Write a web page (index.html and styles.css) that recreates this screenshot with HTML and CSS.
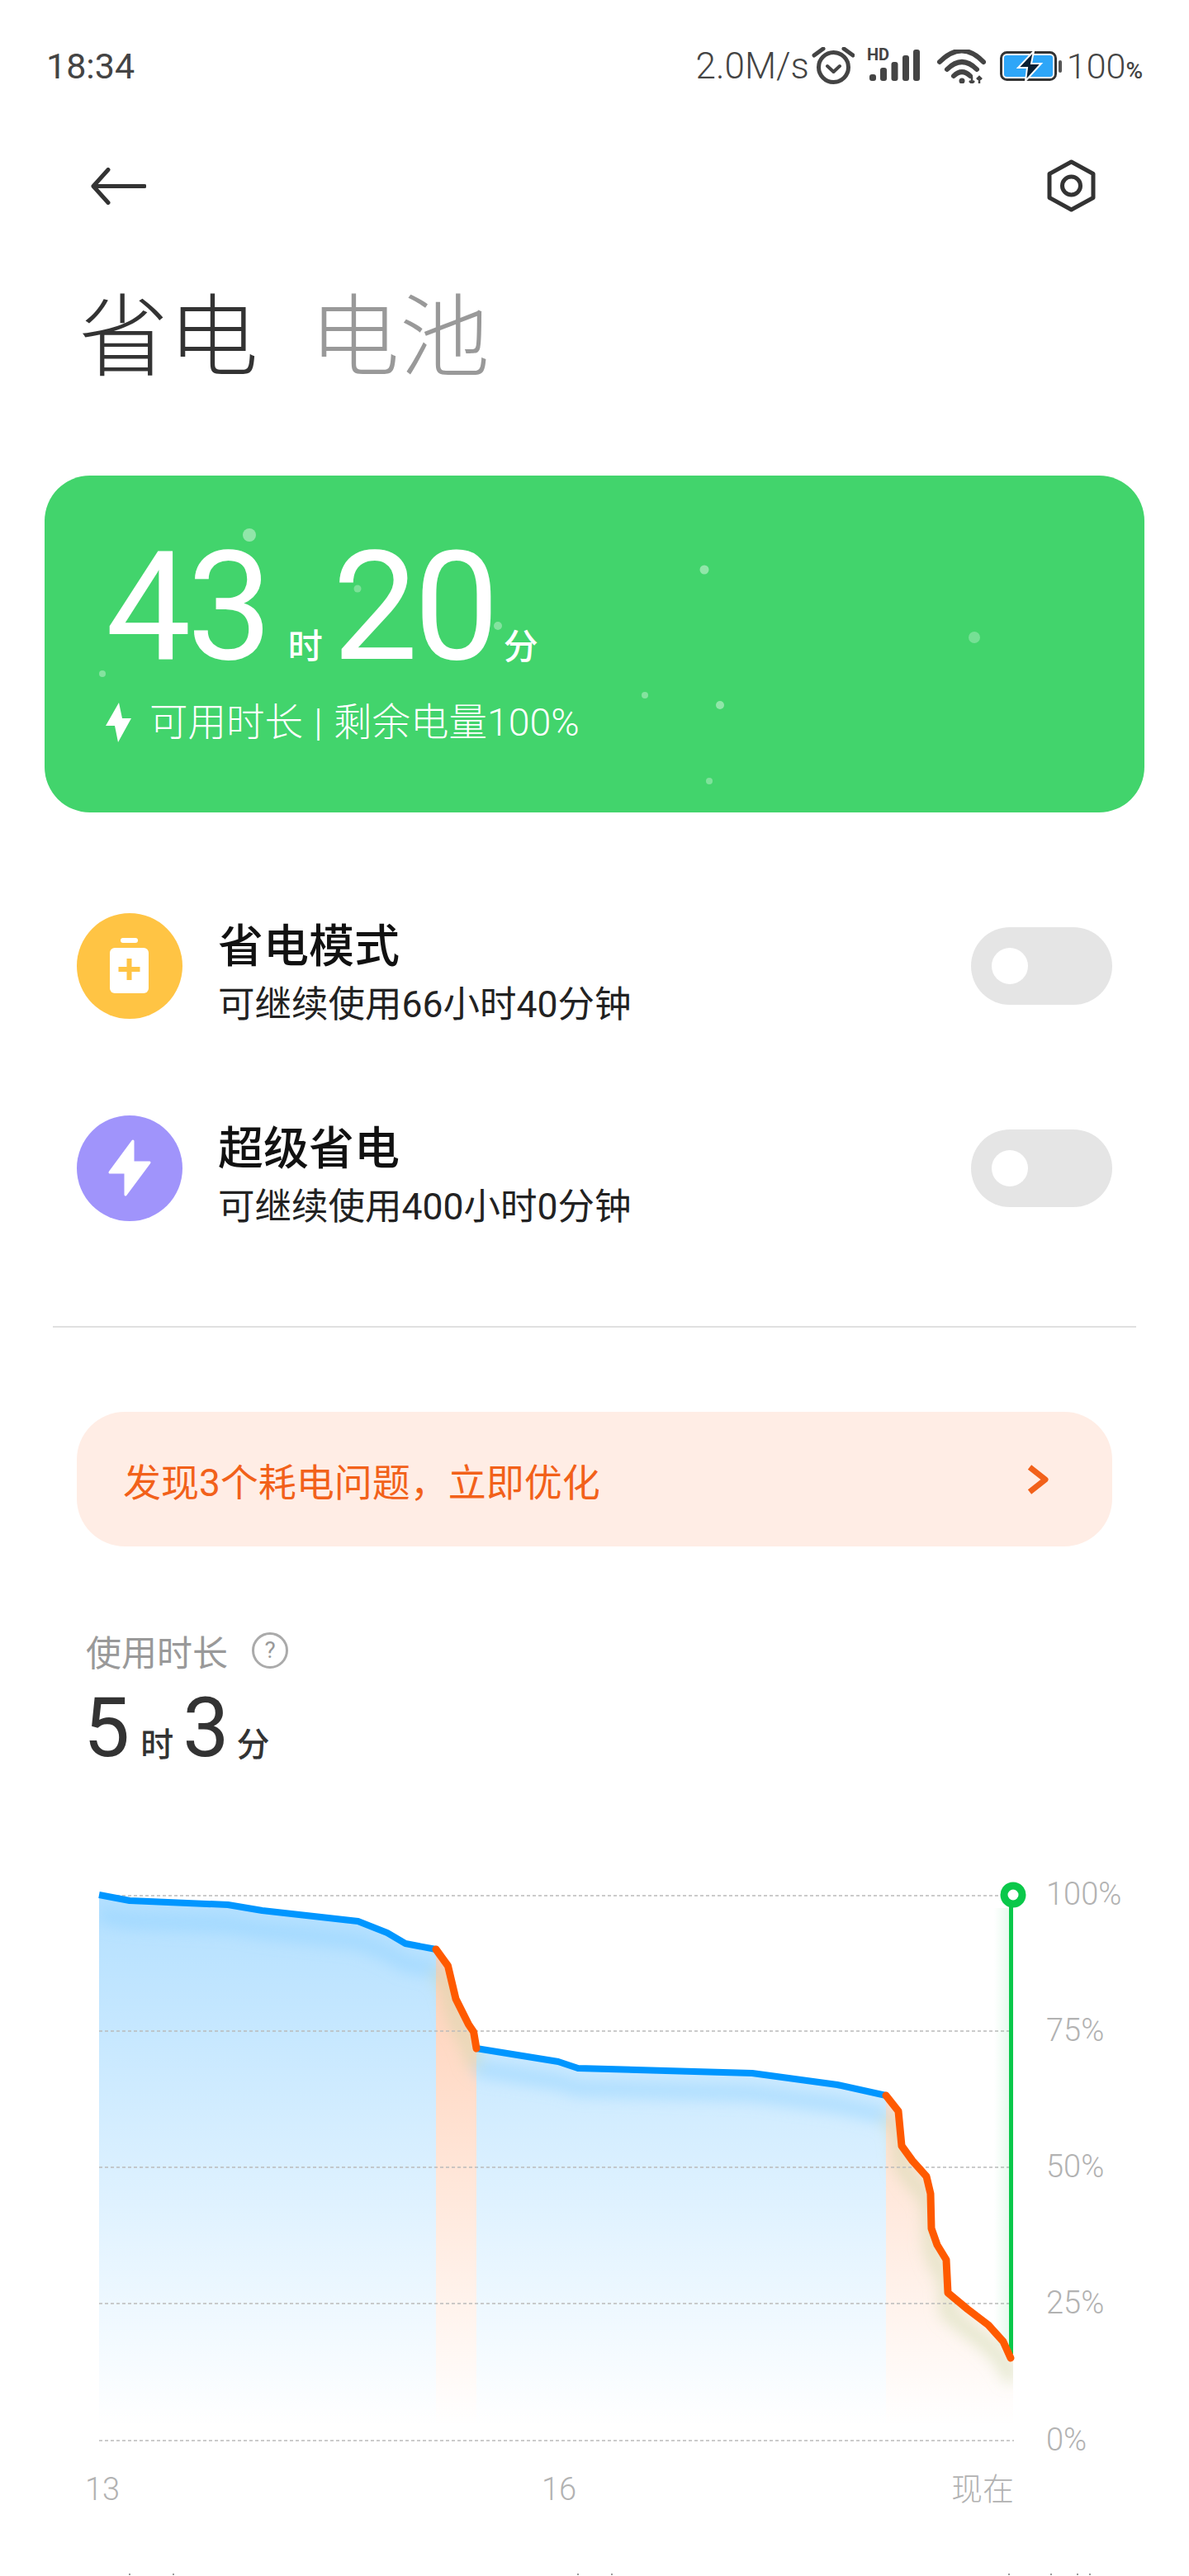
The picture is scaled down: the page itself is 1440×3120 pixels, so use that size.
FILE: index.html
```html
<!DOCTYPE html>
<html lang="zh-CN">
<head>
    <meta charset="UTF-8" />
    <title>省电</title>
    <link rel="stylesheet" href="styles.css">
</head>
<body>
<div class="page">
    <!-- Status bar -->
    <div class="status-bar">
        <span class="clock">18:34</span>
        <div class="status-right">
            <span class="net-speed">2.0M/s</span>
            <svg class="ic-alarm" viewBox="0 0 52 46">
                <circle cx="26.5" cy="24.5" r="18" fill="none" stroke="#444" stroke-width="5"/>
                <path d="M3 10 L14 2 M39 2 L50 10" stroke="#444" stroke-width="5" stroke-linecap="round"/>
                <path d="M19 23 L26.5 30 L34 23" fill="none" stroke="#444" stroke-width="4" stroke-linecap="round" stroke-linejoin="round"/>
            </svg>
            <svg class="ic-signal" viewBox="0 -6 64 46">
                <text class="hd-text" x="0" y="14">HD</text>
                <rect x="3" y="31" width="8" height="8" rx="3" fill="#444"/>
                <rect x="16" y="23" width="8" height="16" rx="3" fill="#444"/>
                <rect x="29.5" y="16" width="8" height="23" rx="3" fill="#444"/>
                <rect x="43" y="8" width="8" height="31" rx="3" fill="#444"/>
                <rect x="56" y="1" width="8" height="38" rx="3" fill="#444"/>
            </svg>
            <svg class="ic-wifi" viewBox="0 0 59 41">
                <g fill="none" stroke="#444" stroke-width="6" stroke-linecap="round">
                    <path d="M3 15 Q30 -12 56 15"/>
                    <path d="M12 24 Q30 6 48 24"/>
                    <path d="M20 32 Q30 22 40 32"/>
                </g>
                <circle cx="30" cy="38" r="3.5" fill="#444"/>
                <path d="M42 33 V41 M39 38 L42 41 L45 38 M51 41 V33 M48 36 L51 33 L54 36" fill="none" stroke="#444" stroke-width="2.5"/>
            </svg>
            <svg class="ic-battery" viewBox="0 0 75 36">
                <rect x="1.5" y="1.5" width="66" height="33" rx="7" fill="none" stroke="#333" stroke-width="3"/>
                <rect x="5" y="5" width="59" height="26" rx="3" fill="#2ea6f8"/>
                <rect x="71" y="11" width="4" height="15" rx="2" fill="#555"/>
                <path d="M41 0 L22 20 L33 20 L31 36 L50 15 L38 15 Z" fill="#0b2033" stroke="#fff" stroke-width="2"/>
            </svg>
            <span class="batt-text">100<small>%</small></span>
        </div>
    </div>

    <!-- Nav -->
    <div class="nav">
        <svg class="ic-back" viewBox="0 0 67 45">
            <path d="M3 22.5 H65 M21 2.5 L3 22.5 L21 42.5" fill="none" stroke="#333" stroke-width="5" stroke-linecap="round" stroke-linejoin="round"/>
        </svg>
        <svg class="ic-settings" viewBox="0 0 59 64">
            <path d="M29.5 3 L56 17.5 V46.5 L29.5 61 L3 46.5 V17.5 Z" fill="none" stroke="#333" stroke-width="5" stroke-linejoin="round"/>
            <circle cx="29.5" cy="32" r="11" fill="none" stroke="#333" stroke-width="5"/>
        </svg>
    </div>

    <!-- Tabs -->
    <div class="tabs">
        <span class="tab active">省电</span>
        <span class="tab">电池</span>
    </div>

    <!-- Green card -->
    <div class="card">
        <svg class="particles" viewBox="0 0 1332 408">
            <circle cx="248" cy="72" r="8" opacity=".42"/>
            <circle cx="379" cy="137" r="4.5" opacity=".3"/>
            <circle cx="407" cy="171" r="4" opacity=".2"/>
            <circle cx="549" cy="182" r="5" opacity=".35"/>
            <circle cx="70" cy="240" r="4" opacity=".35"/>
            <circle cx="727" cy="266" r="4" opacity=".35"/>
            <circle cx="799" cy="114" r="5.5" opacity=".42"/>
            <circle cx="1126" cy="196" r="7" opacity=".28"/>
            <circle cx="818" cy="278" r="5" opacity=".42"/>
            <circle cx="805" cy="370" r="4" opacity=".32"/>
        </svg>
        <div class="remain">
            <span class="big">43</span><span class="unit">时</span><span class="big">20</span><span class="unit">分</span>
        </div>
        <div class="remain-sub">
            <svg class="ic-bolt" viewBox="0 0 31 48"><path d="M16 0 L0 28 H11 L15 48 L31 19 H20 Z" fill="#fff"/></svg>
            <span>可用时长 | 剩余电量100%</span>
        </div>
    </div>

    <!-- Modes -->
    <div class="modes">
        <div class="mode">
            <svg class="mode-icon" viewBox="0 0 128 128">
                <circle cx="64" cy="64" r="64" fill="#ffc444"/>
                <rect x="53" y="30" width="21" height="6" rx="3" fill="#fff"/>
                <rect x="40" y="42" width="47" height="55" rx="6" fill="#fff"/>
                <path d="M50.5 68 H76.5 M63.5 55 V81" stroke="#ffc444" stroke-width="6"/>
            </svg>
            <div class="mode-text">
                <div class="mode-title">省电模式</div>
                <div class="mode-sub">可继续使用66小时40分钟</div>
            </div>
            <div class="toggle"><span class="knob"></span></div>
        </div>
        <div class="mode">
            <svg class="mode-icon" viewBox="0 0 128 128">
                <circle cx="64" cy="64" r="64" fill="#a094fb"/>
                <path d="M68 31 L40 69 H59 V96 L88 57 H68 Z" fill="#fff" stroke="#fff" stroke-width="3" stroke-linejoin="round"/>
            </svg>
            <div class="mode-text">
                <div class="mode-title">超级省电</div>
                <div class="mode-sub">可继续使用400小时0分钟</div>
            </div>
            <div class="toggle"><span class="knob"></span></div>
        </div>
    </div>

    <div class="divider"></div>

    <!-- Problem banner -->
    <div class="banner">
        <span>发现3个耗电问题，立即优化</span>
        <svg class="ic-chevron" viewBox="0 0 26 36">
            <path d="M3 3 L22 18 L3 33" fill="none" stroke="#f2611a" stroke-width="7" stroke-linejoin="round"/>
        </svg>
    </div>

    <!-- Usage -->
    <div class="usage">
        <div class="usage-label">
            <span>使用时长</span>
            <span class="help">?</span>
        </div>
        <div class="usage-value">
            <span class="num">5</span><span class="unit-sm">时</span><span class="num">3</span><span class="unit-sm">分</span>
        </div>
    </div>

    <!-- Battery chart -->
    <svg class="chart" viewBox="0 2270 1440 770">
        <defs>
            <linearGradient id="blueFill" gradientUnits="userSpaceOnUse" x1="0" y1="2296" x2="0" y2="2940">
                <stop offset="0" stop-color="#0096ff" stop-opacity=".3"/>
                <stop offset="1" stop-color="#0096ff" stop-opacity="0"/>
            </linearGradient>
            <linearGradient id="orangeFill" gradientUnits="userSpaceOnUse" x1="0" y1="2296" x2="0" y2="2940">
                <stop offset="0" stop-color="#ff5a00" stop-opacity=".32"/>
                <stop offset="1" stop-color="#ff5a00" stop-opacity="0"/>
            </linearGradient>
            <linearGradient id="glow" x1="0" y1="0" x2="1" y2="0">
                <stop offset="0" stop-color="#0ac84a" stop-opacity="0"/>
                <stop offset="1" stop-color="#0ac84a" stop-opacity=".1"/>
            </linearGradient>
            <filter id="soft" x="-10%" y="-30%" width="120%" height="160%">
                <feGaussianBlur stdDeviation="9"/>
            </filter>
            <clipPath id="underCurve">
                <path d="M120 2296 L157 2303 L276 2308 L317.5 2315 L433.6 2328 L469 2342 L491 2355 L528 2362 L542.5 2382 L552 2422 L567.5 2453 L573.6 2462 L577 2482 L676 2498 L700 2506 L911 2512 L1014 2526 L1073 2539 L1088 2558 L1092 2600 L1105 2618 L1122 2637 L1127 2658 L1128 2700 L1135 2720 L1146 2738 L1148 2778 L1172 2798 L1197 2817 L1215 2837 L1227 2860 V2950 H120 Z"/>
            </clipPath>
        </defs>

        <!-- fills -->
        <path fill="url(#blueFill)" d="M120 2296 L157 2303 L276 2308 L317.5 2315 L433.6 2328 L469 2342 L491 2355 L528 2362 V2950 H120 Z"/>
        <path fill="url(#orangeFill)" d="M528 2362 L542.5 2382 L552 2422 L567.5 2453 L573.6 2462 L577 2482 V2950 H528 Z"/>
        <path fill="url(#blueFill)" d="M577 2482 L676 2498 L700 2506 L911 2512 L1014 2526 L1073 2539 V2950 H577 Z"/>
        <path fill="url(#orangeFill)" d="M1073 2539 L1088 2558 L1092 2600 L1105 2618 L1122 2637 L1127 2658 L1128 2700 L1135 2720 L1146 2738 L1148 2778 L1172 2798 L1197 2817 L1215 2837 L1227 2860 V2950 H1073 Z"/>

        <!-- soft shadow under the curve -->
        <g clip-path="url(#underCurve)" fill="none" stroke-width="18">
            <g transform="translate(0 24)" filter="url(#soft)">
                <path stroke="#8fd2ff" stroke-opacity=".55" d="M120 2296 L157 2303 L276 2308 L317.5 2315 L433.6 2328 L469 2342 L491 2355 L528 2362"/>
                <path stroke="#c9d8a8" stroke-opacity=".5" d="M528 2362 L542.5 2382 L552 2422 L567.5 2453 L577 2482"/>
                <path stroke="#8fd2ff" stroke-opacity=".55" d="M577 2482 L676 2498 L700 2506 L911 2512 L1014 2526 L1073 2539"/>
                <path stroke="#c9d8a8" stroke-opacity=".5" d="M1073 2539 L1088 2558 L1092 2600 L1105 2618 L1122 2637 L1127 2658 L1128 2700 L1135 2720 L1146 2738 L1148 2778 L1172 2798 L1197 2817 L1215 2837 L1227 2860"/>
            </g>
        </g>

        <!-- grid -->
        <g class="grid">
            <line x1="120" y1="2297" x2="1212" y2="2297"/>
            <line x1="120" y1="2461" x2="1222" y2="2461"/>
            <line x1="120" y1="2626" x2="1222" y2="2626"/>
            <line x1="120" y1="2791" x2="1222" y2="2791"/>
            <line x1="120" y1="2957" x2="1228" y2="2957"/>
        </g>

        <!-- now marker -->
        <rect x="1204" y="2312" width="18" height="530" fill="url(#glow)"/>
        <line x1="1224.5" y1="2296" x2="1224.5" y2="2852" stroke="#0ac84a" stroke-width="5"/>
        <circle cx="1227" cy="2296" r="11" fill="#fff" stroke="#0ac84a" stroke-width="9"/>

        <!-- curve -->
        <g fill="none" stroke-linejoin="round">
            <path stroke="#0096ff" stroke-width="8" d="M120 2296 L157 2303 L276 2308 L317.5 2315 L433.6 2328 L469 2342 L491 2355 L528 2362"/>
            <path stroke="#0096ff" stroke-width="8" d="M577 2482 L676 2498 L700 2506 L911 2512 L1014 2526 L1073 2539"/>
            <path stroke="#ff5a00" stroke-width="9" stroke-linecap="round" d="M528 2362 L542.5 2382 L552 2422 L567.5 2453 L573.6 2462 L577 2482"/>
            <path stroke="#ff5a00" stroke-width="9" stroke-linecap="round" d="M1073 2539 L1088 2558 L1092 2600 L1105 2618 L1122 2637 L1127 2658 L1128 2700 L1135 2720 L1146 2738 L1148 2778 L1172 2798 L1197 2817 L1215 2837 L1224 2857"/>
        </g>

        <!-- axes -->
        <g class="axis">
            <text x="1267" y="2308">100%</text>
            <text x="1267" y="2473">75%</text>
            <text x="1267" y="2638">50%</text>
            <text x="1267" y="2803">25%</text>
            <text x="1267" y="2969">0%</text>
            <text x="103" y="3029">13</text>
            <text x="656" y="3029">16</text>
            <text x="1228" y="3029" text-anchor="end">现在</text>
        </g>
    </svg>

    <!-- next row, only its top edge is on screen -->
    <svg class="cut-row" viewBox="0 0 1440 2">
        <path d="M157 0 V2 M210 0 V2 M700 0 V2 M741 0 V2 M1222 0 V2 M1273 0 V2 M1305 0 V2 M1320 0 V2" stroke="#999" stroke-width="2"/>
    </svg>
</div>
</body>
</html>
```

FILE: styles.css
```css
/* Page */
html, body {
    margin: 0;
    padding: 0;
    background: #fff;
}

.page {
    width: 1440px;
    height: 3120px;
    overflow: hidden;
    font-family: Roboto, "Noto Sans CJK SC", sans-serif;
    color: #333;
}

/* Status bar */
.status-bar {
    height: 160px;
    padding: 0 56px;
    display: flex;
    justify-content: space-between;
    align-items: center;
    color: #444;
    font-size: 43px;
}

.status-right {
    display: flex;
    align-items: center;
}

.net-speed {
    font-weight: 300;
    font-size: 44px;
}

.ic-alarm { width: 52px; height: 46px; margin-left: 3px; }
.ic-signal { width: 64px; height: 46px; margin-left: 15px; margin-bottom: 8px; }
.ic-wifi { width: 59px; height: 41px; margin-left: 21px; }
.ic-battery { width: 75px; height: 36px; margin-left: 17px; }

.hd-text {
    font-family: Roboto, sans-serif;
    font-size: 20px;
    font-weight: 700;
    fill: #444;
}

.batt-text {
    margin-left: 6px;
    font-weight: 300;
    font-size: 43px;
}

.batt-text small {
    font-size: 28px;
    font-weight: 500;
}

/* Nav */
.nav {
    height: 90px;
    margin-top: 20px;
    padding: 0 113px 0 110px;
    display: flex;
    justify-content: space-between;
    align-items: center;
}

.ic-back { width: 67px; height: 45px; }
.ic-settings { width: 59px; height: 64px; }

/* Tabs */
.tabs {
    height: 130px;
    margin-top: 65px;
    padding-left: 95px;
    display: flex;
    align-items: center;
    gap: 62px;
}

.tab {
    font-family: "Noto Sans CJK SC", sans-serif;
    font-size: 109px;
    font-weight: 300;
    line-height: 130px;
    color: #999;
}

.tab.active { color: #333; }

/* Green card */
.card {
    position: relative;
    height: 408px;
    margin: 111px 54px 0;
    background: #42d46c;
    border-radius: 55px;
    color: #fff;
    overflow: hidden;
}

.particles {
    position: absolute;
    top: 0;
    left: 0;
    width: 100%;
    height: 100%;
    fill: #fff;
}

.remain {
    position: relative;
    height: 236px;
    padding: 41px 0 0 74px;
    display: flex;
    align-items: baseline;
}

.remain .big {
    font-size: 184px;
    font-weight: 400;
    line-height: 236px;
    letter-spacing: -5px;
}

.remain .unit {
    font-family: "Noto Sans CJK SC", sans-serif;
    font-size: 42px;
    font-weight: 500;
    margin: 0 12px 0 24px;
}

.remain .unit:last-child { margin-left: 10px; }

.remain-sub {
    position: relative;
    margin-top: -3px;
    padding-left: 74px;
    display: flex;
    align-items: center;
    font-size: 46.5px;
    font-weight: 300;
    line-height: 50px;
    word-spacing: 2px;
}

.ic-bolt {
    width: 31px;
    height: 48px;
    margin-right: 22px;
}

/* Modes */
.modes {
    margin-top: 122px;
    padding: 0 93px;
    display: flex;
    flex-direction: column;
    gap: 117px;
}

.mode {
    display: flex;
    align-items: center;
    height: 128px;
}

.mode-icon {
    width: 128px;
    height: 128px;
    flex-shrink: 0;
}

.mode-text {
    flex: 1;
    margin-left: 43px;
    padding-top: 16px;
}

.mode-title {
    font-size: 55px;
    font-weight: 500;
    line-height: 64px;
    color: #111;
}

.mode-sub {
    margin-top: 14px;
    font-size: 44.5px;
    line-height: 50px;
    color: #222;
}

.toggle {
    width: 171px;
    height: 94px;
    padding-left: 25px;
    box-sizing: border-box;
    display: flex;
    align-items: center;
    background: #e5e5e5;
    border-radius: 47px;
}

.knob {
    width: 44px;
    height: 44px;
    background: #fff;
    border-radius: 50%;
}

.divider {
    height: 2px;
    margin: 127px 64px 0;
    background: #e0e0e0;
}

/* Problem banner */
.banner {
    height: 163px;
    margin: 102px 93px 0;
    padding: 0 77px 0 56px;
    display: flex;
    justify-content: space-between;
    align-items: center;
    background: #ffede5;
    border-radius: 58px;
    color: #f2611a;
    font-size: 46px;
}

.ic-chevron { width: 26px; height: 36px; }

/* Usage */
.usage {
    margin-top: 96px;
    padding-left: 104px;
}

.usage-label {
    display: flex;
    align-items: center;
    gap: 29px;
    height: 60px;
    font-size: 43px;
    color: #999;
}

.help {
    width: 44px;
    height: 44px;
    box-sizing: border-box;
    border: 3px solid #aaa;
    border-radius: 50%;
    display: flex;
    justify-content: center;
    align-items: center;
    font-size: 28px;
    line-height: 1;
}

.usage-value {
    height: 100px;
    margin-top: 14px;
    margin-left: -3px;
    display: flex;
    align-items: baseline;
}

.usage-value .num {
    font-size: 100px;
    font-weight: 400;
    line-height: 100px;
}

.usage-value .unit-sm {
    font-family: "Noto Sans CJK SC", sans-serif;
    font-size: 40px;
    font-weight: 500;
    margin: 0 11px 0 13px;
}

.usage-value .unit-sm:last-child { margin-left: 9px; }

/* Chart */
.chart {
    display: block;
    width: 1440px;
    height: 770px;
    margin-top: 126px;
}

.grid line {
    stroke: #bbb;
    stroke-width: 1.5;
    stroke-dasharray: 4 3;
}

.axis text {
    font-size: 38px;
    font-weight: 300;
    fill: #b2b2b2;
}

.cut-row {
    display: block;
    width: 1440px;
    height: 2px;
    margin-top: 78px;
}
```
